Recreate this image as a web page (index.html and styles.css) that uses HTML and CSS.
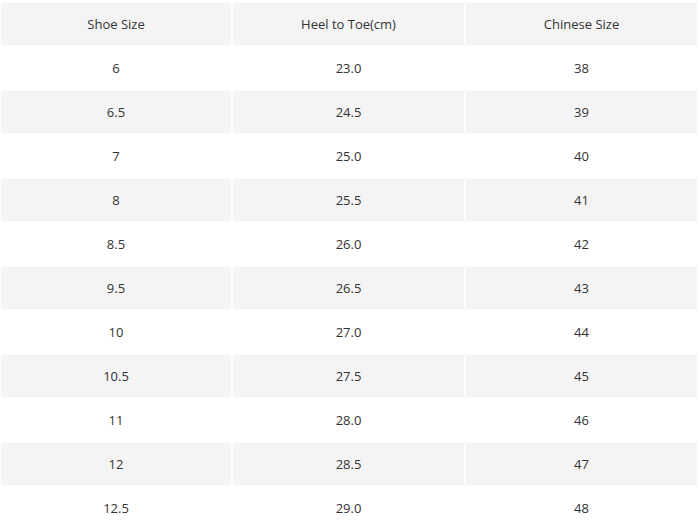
FILE: index.html
```html
<!DOCTYPE html>
<html>
<head>
<meta charset="utf-8">
<link rel="stylesheet" href="styles.css">
</head>
<body>
<div class="table">
  <div class="row shade"><div class="cell">Shoe Size</div><div class="cell">Heel to Toe(cm)</div><div class="cell">Chinese Size</div></div>
  <div class="row"><div class="cell">6</div><div class="cell">23.0</div><div class="cell">38</div></div>
  <div class="row shade"><div class="cell">6.5</div><div class="cell">24.5</div><div class="cell">39</div></div>
  <div class="row"><div class="cell">7</div><div class="cell">25.0</div><div class="cell">40</div></div>
  <div class="row shade"><div class="cell">8</div><div class="cell">25.5</div><div class="cell">41</div></div>
  <div class="row"><div class="cell">8.5</div><div class="cell">26.0</div><div class="cell">42</div></div>
  <div class="row shade"><div class="cell">9.5</div><div class="cell">26.5</div><div class="cell">43</div></div>
  <div class="row"><div class="cell">10</div><div class="cell">27.0</div><div class="cell">44</div></div>
  <div class="row shade"><div class="cell">10.5</div><div class="cell">27.5</div><div class="cell">45</div></div>
  <div class="row"><div class="cell">11</div><div class="cell">28.0</div><div class="cell">46</div></div>
  <div class="row shade"><div class="cell">12</div><div class="cell">28.5</div><div class="cell">47</div></div>
  <div class="row"><div class="cell">12.5</div><div class="cell">29.0</div><div class="cell">48</div></div>
</div>
</body>
</html>
```
FILE: styles.css
```css
html, body {
  margin: 0;
  padding: 0;
  background: #fff;
  overflow: hidden;
}
body {
  font-family: "Open Sans", "Liberation Sans", sans-serif;
  font-size: 13px;
  color: #333;
}
.table {
  display: flex;
  flex-direction: column;
  gap: 2px;
  padding: 3px 3px 0 1px;
}
.row {
  display: grid;
  grid-template-columns: 230px 231px 231px;
  column-gap: 2px;
  height: 42px;
}
.cell {
  display: flex;
  align-items: center;
  justify-content: center;
}
.shade .cell {
  background: #f4f4f4;
}
```
